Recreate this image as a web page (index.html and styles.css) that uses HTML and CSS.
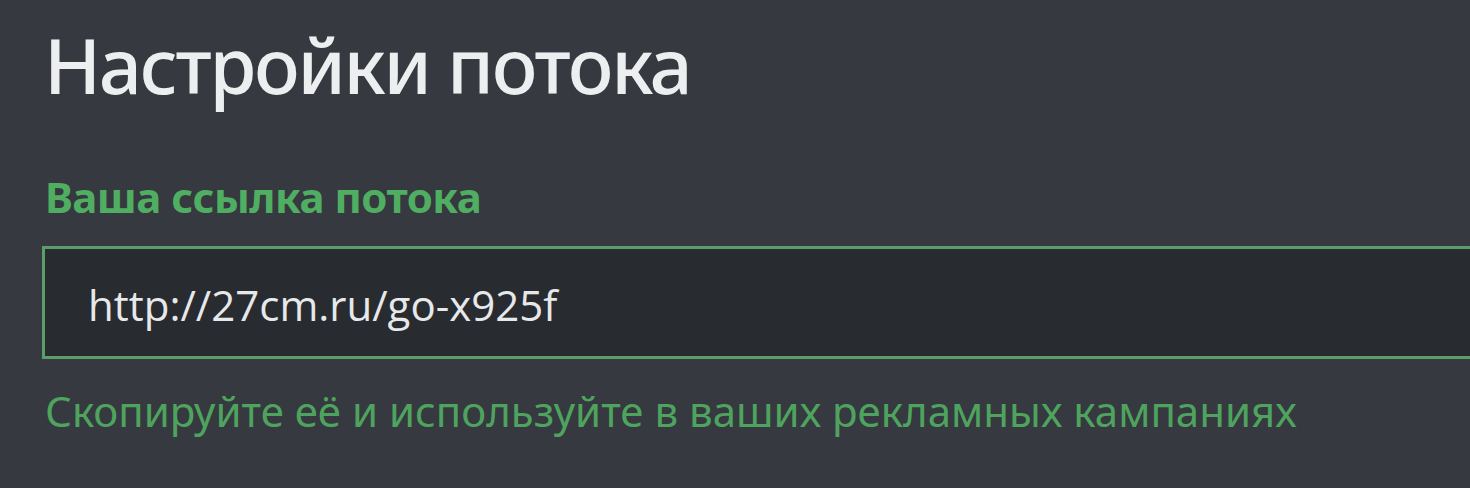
FILE: index.html
```html
<!DOCTYPE html>
<html lang="ru">
<head>
<meta charset="utf-8">
<link rel="stylesheet" href="styles.css">
</head>
<body>
<main class="panel">
  <h1 class="title">Настройки потока</h1>
  <label class="label" for="link">Ваша ссылка потока</label>
  <div class="field">
    <input id="link" class="input" type="text" value="http://27cm.ru/go-x925f" readonly>
  </div>
  <p class="hint">Скопируйте её и используйте в ваших рекламных кампаниях</p>
</main>
</body>
</html>
```
FILE: styles.css
```css
html, body {
  margin: 0;
  padding: 0;
  background: #36393f;
  overflow: hidden;
  width: 1470px;
  height: 488px;
}
.panel {
  display: flex;
  flex-direction: column;
  align-items: flex-start;
  padding: 15px 0 0 42px;
  font-family: "Noto Sans", "Open Sans", sans-serif;
}
.title {
  margin: 0 0 0 2px;
  font-size: 76px;
  font-weight: 500;
  line-height: 100px;
  letter-spacing: -2.3px;
  color: #eceef0;
}
.label {
  margin: 59px 0 0 3px;
  font-size: 42px;
  font-weight: 700;
  line-height: 46px;
  letter-spacing: -0.5px;
  color: #4fae61;
}
.field {
  margin-top: 26px;
  width: 1500px;
}
.input {
  box-sizing: border-box;
  display: block;
  width: 100%;
  height: 113px;
  margin: 0;
  padding: 4px 0 0 43px;
  border: 3px solid #5c9e6a;
  background: #282b2f;
  color: #e6e8ea;
  font-family: "Open Sans", "Noto Sans", sans-serif;
  font-size: 42px;
  outline: none;
}
.hint {
  margin: 27px 0 0 3px;
  font-size: 42px;
  line-height: 50px;
  letter-spacing: 0;
  color: #4ea35e;
  font-family: "Noto Sans", sans-serif;
}
```
